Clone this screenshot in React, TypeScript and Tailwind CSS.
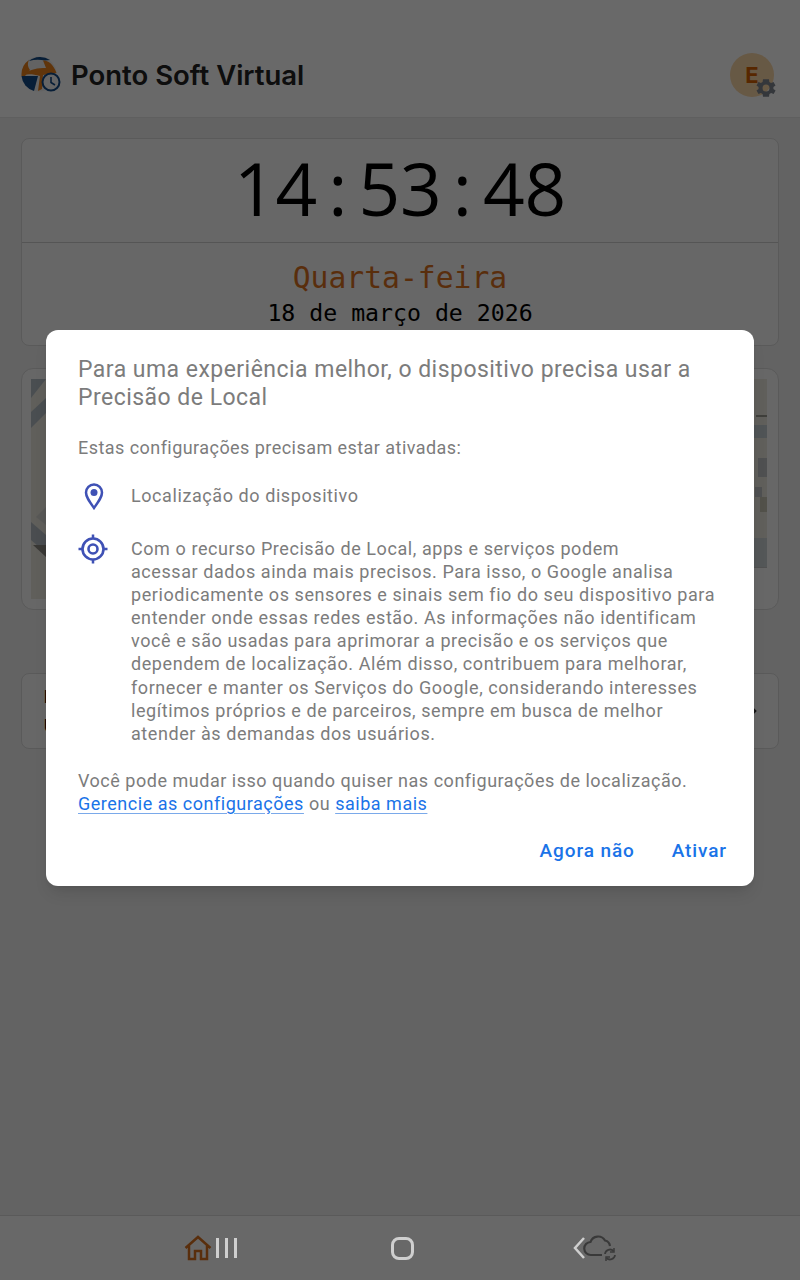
const clockChars = "14:53:48".split("");

const details = [
  "Com o recurso Precisão de Local, apps e serviços podem",
  "acessar dados ainda mais precisos. Para isso, o Google analisa",
  "periodicamente os sensores e sinais sem fio do seu dispositivo para",
  "entender onde essas redes estão. As informações não identificam",
  "você e são usadas para aprimorar a precisão e os serviços que",
  "dependem de localização. Além disso, contribuem para melhorar,",
  "fornecer e manter os Serviços do Google, considerando interesses",
  "legítimos próprios e de parceiros, sempre em busca de melhor",
  "atender às demandas dos usuários.",
];

function Logo() {
  return (
    <svg width="40" height="38" viewBox="0 0 40 38" className="shrink-0">
      <circle cx="18" cy="18" r="17.500" fill="#f1f1f1" />
      <path d="M8 5A17.500 17.500 0 0 1 29 4L24 4.500A30 30 0 0 0 8 5Z" fill="#134a86" />
      <path d="M.500 18A17.500 17.500 0 0 1 8 4C6 8 7 11 9 14L4 20L.500 20Z" fill="#e8801c" />
      <path d="M3 18C9 13 17 12 25 12L22 4.500C26 4 32 7 35.500 17L22 19L21 33L17 35L19 20C12 18 7 18 3 19Z" fill="#e8801c" />
      <path d="M.500 20H17L13 35A17.500 17.500 0 0 1 .500 20Z" fill="#134a86" />
      <circle cx="30" cy="26" r="8.500" fill="#f4f4f4" stroke="#134a86" strokeWidth="2" />
      <path d="M30 21V26.500L34 29" fill="none" stroke="#134a86" strokeWidth="1.600" />
    </svg>
  );
}

function Gear() {
  return (
    <svg width="24" height="24" viewBox="0 0 24 24" className="absolute left-[24px] top-[23px]" fill="#7f858f">
      <path d="M19.400 13a7.600 7.600 0 0 0 0-2l2.100-1.600-2-3.500-2.500 1a7.600 7.600 0 0 0-1.700-1L15 3.200H9l-.4 2.700a7.600 7.600 0 0 0-1.700 1l-2.400-1-2 3.500L4.600 11a7.600 7.600 0 0 0 0 2l-2.100 1.600 2 3.500 2.400-1a7.600 7.600 0 0 0 1.700 1l.4 2.700h6l.4-2.700a7.600 7.600 0 0 0 1.700-1l2.500 1 2-3.500ZM12 15.500a3.500 3.500 0 1 1 0-7 3.500 3.500 0 0 1 0 7Z" />
    </svg>
  );
}

function PinIcon() {
  return (
    <svg width="20" height="28" viewBox="0 0 20 28" fill="none">
      <path d="M10 26C5 19 2 15 2 10.500a8 8 0 0 1 16 0C18 15 15 19 10 26Z" stroke="#3f51b5" strokeWidth="2.500" />
      <circle cx="10" cy="10.500" r="3.500" fill="#3f51b5" />
    </svg>
  );
}

function TargetIcon() {
  return (
    <svg width="30" height="30" viewBox="0 0 30 30" fill="none" stroke="#3f51b5">
      <circle cx="15" cy="15" r="10.500" strokeWidth="2.600" />
      <circle cx="15" cy="15" r="4.500" strokeWidth="2.600" />
      <path d="M15 0.500V5M15 25V29.500M0.500 15H5M25 15H29.500" strokeWidth="2.500" />
    </svg>
  );
}

function HomeIcon() {
  return (
    <svg width="28" height="26" viewBox="0 0 28 26" fill="none" stroke="#d9701f" strokeWidth="2.500">
      <path d="M1.500 13L14 2L26.500 13M5 10.500V24H11V16H17V24H23V10.500" />
    </svg>
  );
}

function CloudSync() {
  return (
    <svg width="34" height="27" viewBox="0 0 34 27" fill="none" stroke="#8c8c8c" strokeWidth="2.200">
      <path d="M19 20H8a6.500 6.500 0 0 1-.5-13A8 8 0 0 1 22 5.500a6.500 6.500 0 0 1 5 5.500" />
      <path d="M22 19a5 5 0 0 1 8.500-3M32 20a5 5 0 0 1-8.500 3" strokeWidth="1.800" />
      <path d="M31 13V17H27M23 26V22H27" strokeWidth="1.500" />
    </svg>
  );
}

// only the strips beside the dialog can be seen
function MapPreview() {
  return (
    <svg width="736" height="220" viewBox="0 0 736 220" className="block">
      <rect width="736" height="188" fill="#e8e6de" />
      <rect y="188" width="40" height="32" fill="#e8e6de" />
      <path d="M0 0H15V0L0 19Z" fill="#b4bec4" />
      <path d="M0 33L15 19V34L0 49Z" fill="#b4bec4" />
      <path d="M0 143L15 156V174L0 161Z" fill="#b4bcc2" />
      <path d="M2 166L15 166V178Z" fill="#8b8880" />
      <path d="M15 128L5 138L15 146Z" fill="#d6d6d2" />
      <rect x="725" y="36" width="11" height="2" fill="#9a9a90" />
      <rect x="723" y="46" width="13" height="13" fill="#c2ccd2" />
      <rect x="727" y="79" width="9" height="19" fill="#c0c2c6" />
      <rect x="724" y="108" width="7" height="10" fill="#c0c2c6" />
      <rect x="729" y="118" width="7" height="15" fill="#c8c4b4" />
      <rect x="710" y="159" width="26" height="29" fill="#cdd3d6" />
      <rect x="710" y="188" width="26" height="1" fill="#c4c4c4" />
    </svg>
  );
}

export default function App() {
  return (
    <div className="relative flex h-[1280px] w-[800px] flex-col overflow-hidden bg-[#f1f1f1] font-['Roboto',sans-serif]">
      <header className="flex h-[118px] shrink-0 items-center justify-between border-b border-[#e6e6e6] bg-[#ffffff] pl-[21px] pr-[26px] pt-[33px]">
        <div className="flex items-center gap-[10px]">
          <Logo />
          <span className="pt-[2px] font-['Inter',sans-serif] text-[27.500px] font-semibold text-[#222]">Ponto Soft Virtual</span>
        </div>
        <div className="relative size-[44px] rounded-full bg-[#fbd7a8] text-center font-['Inter',sans-serif] text-[22px] font-bold leading-[44px] text-[#d35f00]">
          E
          <Gear />
        </div>
      </header>

      <main className="flex flex-1 flex-col px-[21px] pt-[20px]">
        <section className="h-[208px] rounded-[8px] border border-[#dadada] bg-[#f9f9f9] text-center font-['DejaVu_Sans_Mono',monospace]">
          <div className="flex h-[104px] justify-center border-b border-[#cfcfcf] font-['Open_Sans',sans-serif] text-[73px] leading-[98px] text-black">
            {clockChars.map((c, i) => (
              <span key={i} className="w-[41.500px] text-center">{c}</span>
            ))}
          </div>
          <div className="pt-[16px] text-[29.700px] leading-[38px] text-[#d9701f]">Quarta-feira</div>
          <div className="text-[23.200px] leading-[31px] text-black">18 de março de 2026</div>
        </section>

        <section className="mt-[22px] h-[242px] rounded-[12px] border border-[#dadada] bg-[#f9f9f9] px-[9px] pt-[10px]">
          <MapPreview />
        </section>

        <section className="mt-[63px] flex h-[76px] items-center justify-between rounded-[8px] border border-[#dadada] bg-[#f9f9f9] pl-[22px] pr-[21px]">
          <div className="text-[18px] font-bold leading-[29px] text-black">
            <div>Registro</div>
            <div>Último</div>
          </div>
          <svg width="8" height="12" viewBox="0 0 8 12" fill="none" stroke="#333" strokeWidth="2.500">
            <path d="M1 1L6 6L1 11" />
          </svg>
        </section>
      </main>

      <nav className="flex h-[65px] shrink-0 items-center justify-center gap-[154px] border-t border-[#dadada] bg-[#fdfdfd]">
        <div className="flex items-center gap-[4px]">
          <HomeIcon />
          <div className="relative z-10 flex gap-[6px]">
            <span className="h-[20px] w-[3px] bg-[#cfcfcf]" />
            <span className="h-[20px] w-[3px] bg-[#cfcfcf]" />
            <span className="h-[20px] w-[3px] bg-[#cfcfcf]" />
          </div>
        </div>
        <span className="relative z-10 size-[23px] rounded-[8px] border-[3px] border-[#cfcfcf]" />
        <div className="ml-[4px] flex items-center">
          <svg width="14" height="24" viewBox="0 0 14 24" fill="none" stroke="#cfcfcf" strokeWidth="2.500" className="relative z-10">
            <path d="M12 2L3 12L12 22" />
          </svg>
          <div className="-ml-[3px]"><CloudSync /></div>
        </div>
      </nav>

      {/* dim layer + dialog */}
      <div className="absolute inset-0 bg-black/[0.59]" />
      <div className="absolute left-[46px] top-[330px] z-20 h-[556px] w-[708px] rounded-[12px] bg-white px-[32px] pt-[26px] text-[#7c7c7c] shadow-lg">
        <h2 className="text-[23px] leading-[28px] tracking-[0.47px]">
          Para uma experiência melhor, o dispositivo precisa usar a
          <br />
          Precisão de Local
        </h2>
        <p className="mt-[24px] text-[18px] leading-[24px] tracking-[0.45px]">Estas configurações precisam estar ativadas:</p>
        <div className="mt-[22px] flex items-start">
          <div className="flex w-[53px] justify-start pl-[6px]"><PinIcon /></div>
          <p className="text-[18px] leading-[28px] tracking-[0.58px]">Localização do dispositivo</p>
        </div>
        <div className="mt-[21px] flex items-start">
          <div className="mt-[3px] w-[53px]"><TargetIcon /></div>
          <p className="pt-[6px] text-[18px] leading-[23.100px] tracking-[0.57px]">
            {details.map((line) => (
              <span key={line} className="block whitespace-nowrap">{line}</span>
            ))}
          </p>
        </div>
        <p className="mt-[24px] text-[18px] leading-[23px] tracking-[0.52px]">
          Você pode mudar isso quando quiser nas configurações de localização.
          <br />
          <a className="text-[#1a73e8] underline decoration-[#7aa9ea] underline-offset-[3px]">Gerencie as configurações</a> ou{" "}
          <a className="text-[#1a73e8] underline decoration-[#7aa9ea] underline-offset-[3px]">saiba mais</a>
        </p>
        <div className="-mr-[5px] mt-[22px] flex justify-end gap-[37px] text-[19px] font-medium tracking-[0.9px] text-[#1a73e8]">
          <button>Agora não</button>
          <button>Ativar</button>
        </div>
      </div>
    </div>
  );
}
